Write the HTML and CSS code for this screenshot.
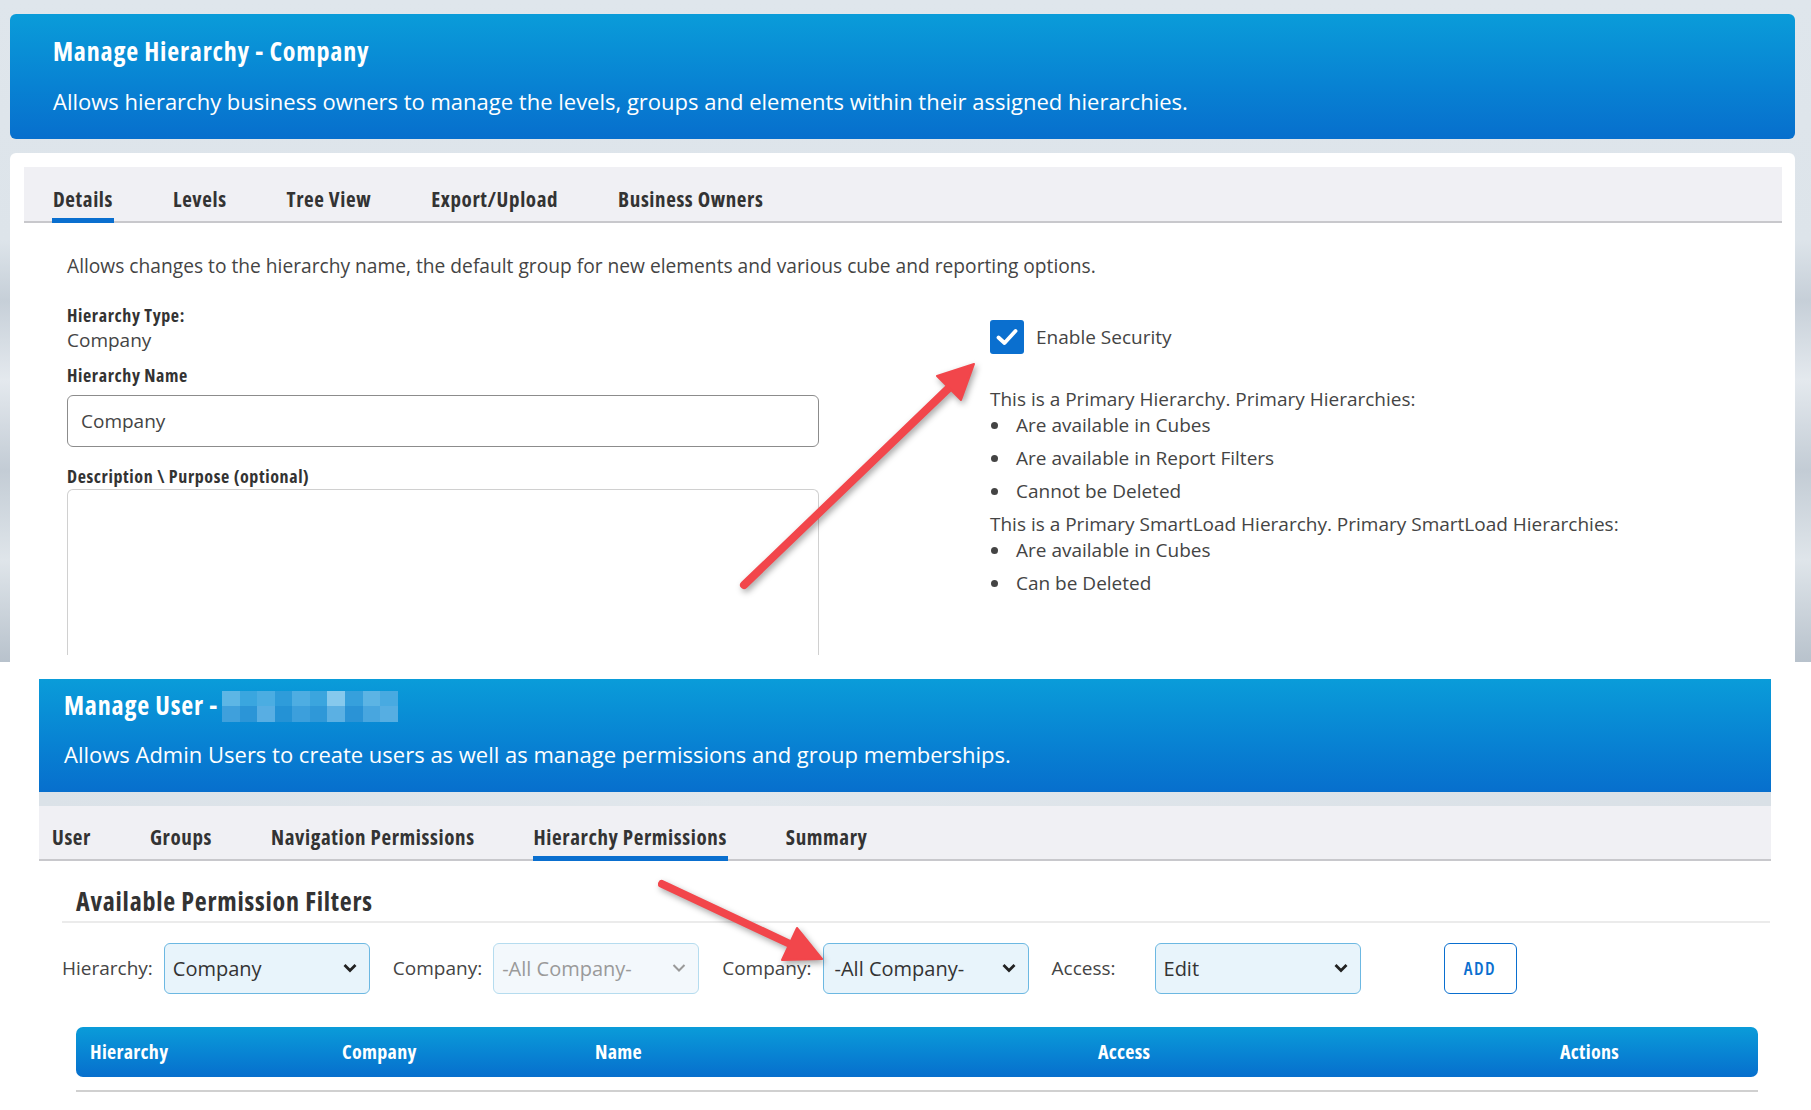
FILE: index.html
```html
<html lang="en">
  <head>
    <meta charset="UTF-8" />
    <title>Manage Hierarchy / Manage User</title>
    <link rel="stylesheet" href="styles.css">
  </head>
  <body>
    <!-- first capture: manage hierarchy -->
    <div class="shot-top">
      <div class="banner">
        <h1 class="banner-title">Manage Hierarchy - Company</h1>
        <p class="banner-text">Allows hierarchy business owners to manage the levels, groups and elements within their assigned hierarchies.</p>
      </div>
      <div class="card">
        <ul class="tabs tabs-top">
          <li class="active">Details</li>
          <li>Levels</li>
          <li>Tree View</li>
          <li>Export/Upload</li>
          <li>Business Owners</li>
        </ul>
        <div class="details">
          <p class="intro">Allows changes to the hierarchy name, the default group for new elements and various cube and reporting options.</p>
          <div class="details-cols">
            <div class="col-left">
              <div class="label">Hierarchy Type:</div>
              <div class="value">Company</div>
              <div class="label label-name">Hierarchy Name</div>
              <div class="input">Company</div>
              <div class="label label-desc">Description \ Purpose (optional)</div>
              <div class="textarea"></div>
              <div class="label label-cut">Default Group</div>
            </div>
            <div class="col-right">
              <div class="check-row">
                <span class="checkbox">
                  <svg width="22" height="18" viewBox="0 0 22 18"><path d="M2.5 9.5 L8.5 15 L19.5 3" fill="none" stroke="#fff" stroke-width="3.8" stroke-linecap="round" stroke-linejoin="round"/></svg>
                </span>
                <span>Enable Security</span>
              </div>
              <p class="note note-first">This is a Primary Hierarchy. Primary Hierarchies:</p>
              <ul class="bullets">
                <li>Are available in Cubes</li>
                <li>Are available in Report Filters</li>
                <li>Cannot be Deleted</li>
              </ul>
              <p class="note">This is a Primary SmartLoad Hierarchy. Primary SmartLoad Hierarchies:</p>
              <ul class="bullets">
                <li>Are available in Cubes</li>
                <li>Can be Deleted</li>
              </ul>
            </div>
          </div>
        </div>
      </div>
    </div>

    <!-- second capture: manage user -->
    <div class="shot-bottom">
      <div class="banner banner-user">
        <h1 class="banner-title title-user">Manage User -
          <span class="blur">
            <i style="background:#5db6e5"></i><i style="background:#3aa6df"></i><i style="background:#4badE2"></i><i style="background:#2e9cda"></i><i style="background:#4eade2"></i><i style="background:#3ba5de"></i><i style="background:#86c9ed"></i><i style="background:#36a0dc"></i><i style="background:#5cb4e4"></i><i style="background:#48aae1"></i>
            <i style="background:#3fa0dc"></i><i style="background:#2b95d7"></i><i style="background:#58aee3"></i><i style="background:#2492d5"></i><i style="background:#3c9fdc"></i><i style="background:#2f98d8"></i><i style="background:#5bb0e3"></i><i style="background:#2a93d6"></i><i style="background:#48a6df"></i><i style="background:#56aee2"></i>
          </span>
        </h1>
        <p class="banner-text">Allows Admin Users to create users as well as manage permissions and group memberships.</p>
      </div>
      <div class="strip"></div>
      <ul class="tabs tabs-user">
        <li>User</li>
        <li>Groups</li>
        <li>Navigation Permissions</li>
        <li class="active">Hierarchy Permissions</li>
        <li>Summary</li>
      </ul>
      <div class="perm">
        <h2 class="perm-title">Available Permission Filters</h2>
        <div class="filters">
          <label>Hierarchy:</label>
          <div class="select"><span>Company</span><svg class="chev" width="14" height="10" viewBox="0 0 14 10"><path d="M1.5 2 L7 7.5 L12.5 2" fill="none" stroke="currentColor" stroke-width="2.8"/></svg></div>
          <label>Company:</label>
          <div class="select disabled"><span>-All Company-</span><svg class="chev" width="14" height="10" viewBox="0 0 14 10"><path d="M1.5 2 L7 7.5 L12.5 2" fill="none" stroke="currentColor" stroke-width="2"/></svg></div>
          <label>Company:</label>
          <div class="select select-wide"><span>-All Company-</span><svg class="chev" width="14" height="10" viewBox="0 0 14 10"><path d="M1.5 2 L7 7.5 L12.5 2" fill="none" stroke="currentColor" stroke-width="2.8"/></svg></div>
          <label>Access:</label>
          <div class="select select-access"><span>Edit</span><svg class="chev" width="14" height="10" viewBox="0 0 14 10"><path d="M1.5 2 L7 7.5 L12.5 2" fill="none" stroke="currentColor" stroke-width="2.8"/></svg></div>
          <button class="btn-add">ADD</button>
        </div>
        <div class="table-head">
          <span class="th-hier">Hierarchy</span>
          <span class="th-comp">Company</span>
          <span class="th-name">Name</span>
          <span class="th-access">Access</span>
          <span class="th-actions">Actions</span>
        </div>
        <div class="table-line"></div>
      </div>
    </div>

    <!-- annotation arrows -->
    <svg class="arrows" width="1811" height="1110" viewBox="0 0 1811 1110">
      <g fill="#f2464b" stroke="#f2464b">
        <line x1="744" y1="585" x2="952" y2="385" stroke-width="8" stroke-linecap="round"/>
        <polygon points="974,364 961,400 937,376" stroke-width="2" stroke-linejoin="round"/>
        <line x1="662" y1="884" x2="790" y2="944" stroke-width="8" stroke-linecap="round"/>
        <polygon points="822,959 782,960 797,928" stroke-width="2" stroke-linejoin="round"/>
      </g>
    </svg>
  </body>
</html>
```

FILE: styles.css
```css
* {
  margin: 0;
  padding: 0;
  box-sizing: border-box;
}
body {
  width: 1811px;
  height: 1110px;
  overflow: hidden;
  position: relative;
  font-family: "Open Sans", "Liberation Sans", sans-serif;
  color: #444;
  background: #fff;
}
ul {
  list-style: none;
}

/* condensed headings */
.banner-title,
.tabs li,
.label,
.perm-title,
.table-head,
.btn-add {
  font-family: "Open Sans", "Liberation Sans", sans-serif;
  font-stretch: condensed;
  font-weight: 700;
}

/* top capture */
.shot-top {
  height: 662px;
  overflow: hidden;
  padding: 14px 16px 0 10px;
  background: linear-gradient(180deg, #dfe6ec 0, #dde4ea 240px, #c6cfd8 300px, #e4e9ee 380px, #c3ccd5 470px, #dfe5ea 560px, #b8c2cc 662px);
}
.banner {
  height: 125px;
  padding: 20px 43px 0;
  border-radius: 6px;
  color: #fff;
  background: linear-gradient(180deg, #0a9cd9 0%, #0883d3 55%, #076fcd 100%);
}
.banner-title {
  font-size: 26px;
  line-height: 34px;
  letter-spacing: 0.8px;
}
.banner-text {
  margin-top: 19px;
  font-size: 22px;
  line-height: 28px;
}
.card {
  margin-top: 14px;
  height: 600px;
  padding: 14px 13px 0 14px;
  border-radius: 6px;
  background: #fff;
}

/* tabs */
.tabs {
  display: flex;
  background: #f0f0f4;
  border-bottom: 2px solid #c8c8cc;
}
.tabs li {
  position: relative;
  font-size: 21px;
  letter-spacing: 0.6px;
  color: #333;
}
.tabs li.active::after {
  content: "";
  position: absolute;
  left: -1px;
  right: -1px;
  bottom: -2px;
  height: 5px;
  background: #0a6fcf;
}
.tabs-top {
  height: 56px;
  padding: 12px 0 0 29px;
  gap: 60px;
}
.tabs-top li {
  line-height: 40px;
}

/* details */
.details {
  padding: 0 43px;
}
.intro {
  margin-top: 30px;
  font-size: 19.2px;
  line-height: 26px;
}
.details-cols {
  display: flex;
  margin-top: 24px;
}
.col-left {
  width: 752px;
}
.label {
  font-size: 18px;
  line-height: 24px;
  letter-spacing: 0.6px;
  color: #333;
}
.value {
  font-size: 19px;
  line-height: 27px;
}
.label-name {
  margin-top: 9px;
}
.input {
  margin-top: 8px;
  height: 52px;
  padding: 0 13px;
  border: 1px solid #8c8c8c;
  border-radius: 6px;
  font-size: 19px;
  line-height: 50px;
}
.label-desc {
  margin-top: 17px;
}
.textarea {
  margin-top: 1px;
  height: 166px;
  border: 1px solid #d0d0d0;
  border-radius: 6px 6px 0 0;
  border-bottom: none;
}
.label-cut {
  margin-top: 3px;
}
.col-right {
  margin-left: 171px;
  padding-top: 17px;
  font-size: 19px;
  line-height: 26px;
}
.check-row {
  display: flex;
  align-items: center;
  gap: 12px;
  height: 34px;
}
.checkbox {
  width: 34px;
  height: 34px;
  border-radius: 3px;
  background: #0a6fcf;
  display: flex;
  align-items: center;
  justify-content: center;
}
.note-first {
  margin-top: 32px;
}
.bullets li {
  position: relative;
  padding-left: 26px;
  margin-bottom: 7px;
}
.bullets li::before {
  content: "";
  position: absolute;
  left: 1px;
  top: 10px;
  width: 7px;
  height: 7px;
  border-radius: 50%;
  background: #444;
}

/* bottom capture */
.shot-bottom {
  height: 448px;
  padding: 17px 40px 0 39px;
  background: #fff;
}
.banner-user {
  height: 113px;
  padding: 9px 25px 0;
  border-radius: 0;
}
.title-user {
  display: flex;
  align-items: center;
  gap: 4px;
  height: 34px;
}
.banner-user .banner-text {
  margin-top: 18px;
}
.blur {
  display: grid;
  grid-template-columns: repeat(10, 17.6px);
  grid-template-rows: 15.5px 15.5px;
  margin-top: 2px;
}
.blur i {
  display: block;
}
.strip {
  height: 14px;
  background: linear-gradient(90deg, #dbe2e8, #e1e7ec 40%, #d9e0e6 100%);
}
.tabs-user {
  height: 55px;
  padding: 11px 0 0 13px;
  gap: 59px;
}
.tabs-user li {
  line-height: 40px;
}
.perm {
  padding: 0 1px 0 23px;
}
.perm-title {
  margin: 24px 0 0 14px;
  font-size: 26px;
  line-height: 32px;
  letter-spacing: 0.75px;
  color: #333;
  padding-bottom: 3px;
}
.perm-title::after {
  content: "";
  display: block;
  margin: 4px 0 0 -14px;
  height: 2px;
  background: #ebebeb;
}

/* filters */
.filters {
  display: flex;
  align-items: center;
  margin-top: 16px;
  height: 52px;
  font-size: 19px;
}
.filters label {
  margin-right: 11px;
  color: #444;
}
.select {
  width: 206px;
  height: 51px;
  margin-right: 23px;
  padding: 0 12px 0 8px;
  display: flex;
  align-items: center;
  justify-content: space-between;
  background: #e8f4fb;
  border: 1px solid #6cb8e2;
  border-radius: 6px;
  color: #333;
  font-size: 20px;
}
.select .chev {
  color: #222;
}
.select.disabled {
  background: #f3f8fc;
  border-color: #b5dcef;
  color: #9a9a9a;
}
.select.disabled .chev {
  color: #999;
}
.select-wide {
  padding-left: 11px;
}
.select-access {
  margin-left: 28px;
}
.btn-add {
  margin-left: 60px;
  width: 73px;
  height: 51px;
  border: 1px solid #0a6fcf;
  border-radius: 6px;
  background: #fff;
  color: #0a6fcf;
  font-size: 18px;
  font-weight: 600;
  letter-spacing: 1.5px;
}

/* table */
.table-head {
  position: relative;
  margin: 33px 12px 0 14px;
  height: 50px;
  border-radius: 7px;
  background: linear-gradient(180deg, #0a9cd9 0%, #0883d3 55%, #076fcd 100%);
  color: #fff;
  font-size: 20px;
  letter-spacing: 0.3px;
  line-height: 50px;
}
.table-head span {
  position: absolute;
  top: 0;
}
.th-hier { left: 14px; }
.th-comp { left: 266px; }
.th-name { left: 519px; }
.th-access { left: 1022px; }
.th-actions { left: 1484px; }
.table-line {
  margin: 13px 12px 0 14px;
  height: 2px;
  background: #d0d0d0;
}

/* overlay */
.arrows {
  position: absolute;
  left: 0;
  top: 0;
  pointer-events: none;
  filter: drop-shadow(2px 3px 3px rgba(0, 0, 0, 0.35));
}
```
